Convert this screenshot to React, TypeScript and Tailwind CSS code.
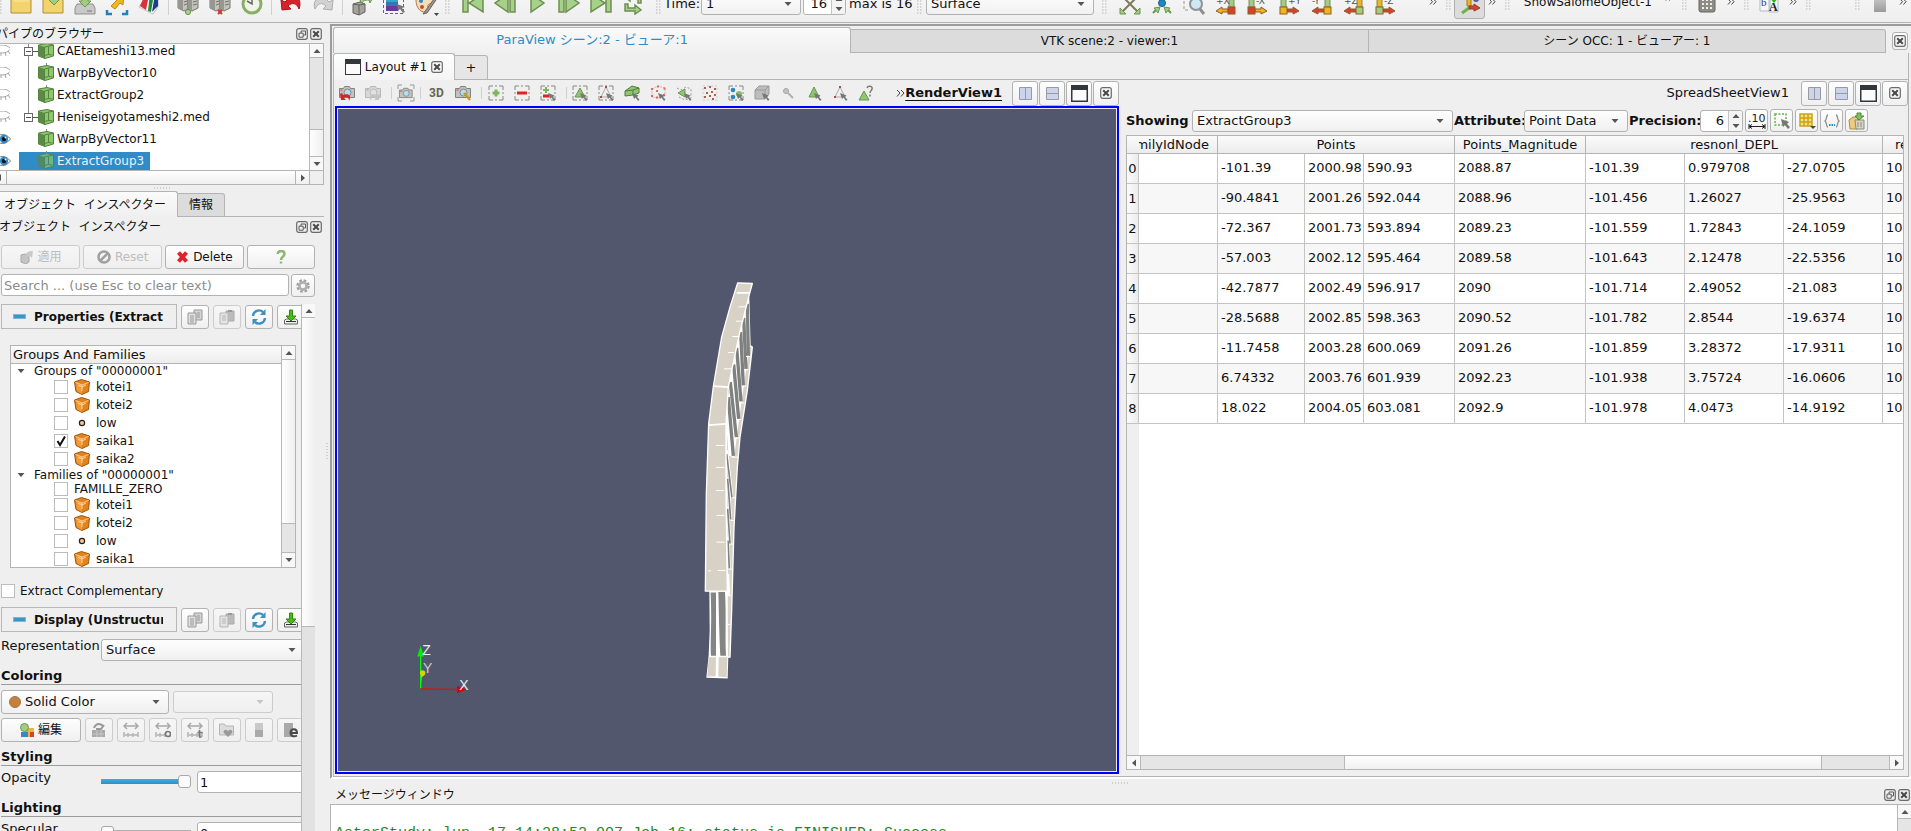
import type { ReactNode } from 'react';
import { clsx } from 'clsx';

const raised = 'border border-[#b2b2b2] rounded-[3px] bg-linear-to-b from-[#fefefe] to-[#f0f0f0]';
const faded = 'border border-[#cccccc] rounded-[3px] bg-linear-to-b from-[#f6f6f6] to-[#efefef]';

/* ---------- small building blocks ---------- */

function Svg({ w = 16, h = 16, className, children }: { w?: number; h?: number; className?: string; children: ReactNode }) {
  return (
    <svg width={w} height={h} viewBox={`0 0 ${w} ${h}`} fill="none" className={clsx('shrink-0', className)} aria-hidden="true">
      {children}
    </svg>
  );
}

function Caret({ dir = 'down', color = '#555' }: { dir?: 'up' | 'down' | 'left' | 'right'; color?: string }) {
  const d = {
    down: 'M0.5 2h7L4 6z',
    up: 'M0.5 6h7L4 2z',
    left: 'M6 0.5v7L2 4z',
    right: 'M2 0.5v7L6 4z',
  }[dir];
  return <Svg w={8} h={8}><path d={d} fill={color} /></Svg>;
}

function Handle() {
  return (
    <Svg w={5} h={18}>
      {[1, 4, 7, 10, 13, 16].map((y) => (
        <path key={y} d={`M0 ${y}h1.5M3 ${y}h1.5`} stroke="#b8b8b8" />
      ))}
    </Svg>
  );
}

function Grip({ vertical }: { vertical?: boolean }) {
  return vertical
    ? <Svg w={2} h={17}><path d="M1 0v17" stroke="#b0b0b0" strokeDasharray="1 2" /></Svg>
    : <Svg w={17} h={2}><path d="M0 1h17" stroke="#b0b0b0" strokeDasharray="1 2" /></Svg>;
}

function Sep({ className }: { className?: string }) {
  return <div className={clsx('w-px shrink-0 bg-[#d0d0d0]', className)} />;
}

function More() {
  return (
    <Svg w={8} h={8}>
      <path d="M1 1l2.5 2.7L1 6.5M4.5 1L7 3.7 4.5 6.5" stroke="#444" />
    </Svg>
  );
}

function CloseGlyph() {
  return (
    <Svg w={12} h={12}>
      <rect x="0.7" y="0.7" width="10.6" height="10.6" rx="2" stroke="#6a6a6a" strokeWidth="1.2" />
      <path d="M3.2 3.2l5.6 5.6M8.8 3.2L3.2 8.8" stroke="#4a4a4a" strokeWidth="2" />
    </Svg>
  );
}

function FloatGlyph() {
  return (
    <Svg w={12} h={12}>
      <rect x="0.7" y="0.7" width="10.6" height="10.6" rx="2" stroke="#6a6a6a" strokeWidth="1.2" />
      <path d="M5 5V3h4.5v4H7.5M3 5.2h4.2v4H3z" stroke="#5a5a5a" />
    </Svg>
  );
}

function DockTitle({ children, className }: { children: ReactNode; className?: string }) {
  return (
    <div className={clsx('flex shrink-0 items-center justify-between', className)}>
      <h2 className="text-xs whitespace-pre">{children}</h2>
      <div className="flex gap-[2px]">
        <button type="button" aria-label="Float"><FloatGlyph /></button>
        <button type="button" aria-label="Close"><CloseGlyph /></button>
      </div>
    </div>
  );
}

function Select({ value, label, className, disabled, children }: { value: string; label: string; className?: string; disabled?: boolean; children?: ReactNode }) {
  return (
    <div className={clsx('relative flex shrink-0 items-center', disabled ? faded : raised, className)}>
      {children}
      <select aria-label={label} disabled={disabled} defaultValue={value} className="h-full w-full appearance-none bg-transparent pl-1 outline-none">
        <option>{value}</option>
      </select>
      <span className="pointer-events-none absolute right-2"><Caret color={disabled ? '#c4c4c4' : '#555'} /></span>
    </div>
  );
}

function Spinner({ value, label, className }: { value: string; label: string; className?: string }) {
  return (
    <div className={clsx('flex shrink-0 overflow-hidden rounded-[3px] border border-[#b2b2b2] bg-white', className)}>
      <input aria-label={label} defaultValue={value} className="w-0 flex-1 px-1 text-right outline-none" />
      <div className="flex w-[14px] flex-col items-center justify-center gap-[2px] border-l border-[#c4c4c4] bg-[#f4f4f4]">
        <Caret dir="up" />
        <Caret />
      </div>
    </div>
  );
}

function VBar({ top, thumb }: { top: string; thumb: string }) {
  return (
    <div className="flex w-[14px] shrink-0 flex-col border-l border-[#b8b8b8] bg-[#e5e5e5]">
      <div className="flex h-[14px] shrink-0 items-center justify-center border-b border-[#b8b8b8] bg-[#f8f8f8]"><Caret dir="up" /></div>
      <div className={clsx('shrink-0', top)} />
      <div className={clsx('shrink-0 border-y border-[#b8b8b8] bg-linear-to-r from-[#fefefe] to-[#f0f0f0]', thumb)} />
      <div className="flex h-[14px] shrink-0 items-center justify-center bg-[#f8f8f8]"><Caret /></div>
    </div>
  );
}

/* ---------- main toolbar ---------- */

const folder = <path d="M1 3h7l2 3h11v14H1z" fill="#f3d36b" stroke="#a98f3c" />;
const server = (
  <>
    <path d="M1 3l5-3 5 3v13l-4 2-6-3zM11 3l5-3 5 3v12l-6 3-4-2z" fill="#c3c3bd" stroke="#74746c" />
    <path d="M1 3l5 2v13l-5-3zM11 3l4 2v13l-4-2z" fill="#97978f" />
    <path d="M7 9l3-1M7 12l3-1M16 9l4-1M16 12l4-1" stroke="#74746c" />
  </>
);

const fileIcons = [
  <>{folder}<path d="M3 8h16" stroke="#fae9a8" /></>,
  <>{folder}<path d="M8 0h7v5h4l-7 7-7-7h3z" fill="#a3cc83" stroke="#6c9550" /></>,
  <><path d="M1 15l2-4h16l2 4v6H1z" fill="#c8c8c8" stroke="#8f8f8f" /><path d="M8 0h6v8h3l-6 6-6-6h3z" fill="#a3cc83" stroke="#6c9550" /><path d="M13 18h5" stroke="#777" /></>,
  <><path d="M8 3l10-2-1 11-3-2-5 6-4-3 6-6z" fill="#f2b71c" stroke="#b98a14" /><path d="M1 17v4h5M16 21h5v-4" stroke="#2a7fb0" strokeWidth="2.5" /></>,
  <><path d="M1 14L10 0h10v14l-5 7z" fill="#fff" stroke="#bbb" /><path d="M2 13L8 0l3 2-3 15z" fill="#d9303a" /><path d="M10 18l2-18 4 1-3 18z" fill="#23883f" /><path d="M14 19l3-18 3 2v10z" fill="#1d3c8a" /></>,
];

const serverIcons = [
  <>{server}<circle cx="11" cy="19" r="2.6" fill="#a7d08a" stroke="#6c9550" /></>,
  <>{server}<path d="M9 17l4 4M13 17l-4 4" stroke="#d3332b" strokeWidth="2" /></>,
  <><circle cx="11" cy="11" r="9" fill="#eef4e6" stroke="#8aad68" strokeWidth="3" /><path d="M11 3v8L6 8" stroke="#666" strokeWidth="1.5" /></>,
];

const undoIcons = [
  <path d="M1 7l1 10 9-1-3-3c4-4 9-3 11 3 3-8-1-14-9-12L5 9z" fill="#d8222a" stroke="#a5151c" />,
  <path d="M21 7l-1 10-9-1 3-3c-4-4-8-3-11 3C0 8 6 3 13 5l4 4z" fill="#d2d2d2" stroke="#adadad" />,
];

const sourceIcons = [
  <><path d="M2 11l7-2 5 2v8l-6 3-6-2z" fill="#a3a39c" stroke="#63635c" /><path d="M8 12v10M2 11l6 1 6-1" stroke="#63635c" /><path d="M9 8c2-5 5-6 9-6l-1-2 5 4-3 6-1-3c-3 0-5 0-7 3z" fill="#a3cc83" stroke="#6c9550" /></>,
  <><rect x="3" y="4" width="12" height="5" fill="#35a7c9" /><rect x="3" y="9" width="12" height="4" fill="#3577b5" /><rect x="3" y="13" width="12" height="5" fill="#6a3b98" /><path d="M0.5 2v18.5h20V2" stroke="#666" strokeDasharray="3 2" /><path d="M14 11l1 7 2-2 3 4 2-1-3-4 3-1z" fill="#777" /></>,
  <><path d="M1 7c0-9 17-9 18 0 0 4-5 3-6 5s2 6-2 7C5 20 1 14 1 7z" fill="#f4dcb4" stroke="#a8804a" /><circle cx="6" cy="8" r="2" fill="#2e8bc5" /><circle cx="7" cy="14" r="2" fill="#d8402f" /><path d="M8 21L19 6l2 1-9 13z" fill="#9a9486" stroke="#6d675a" /><path d="M19 20h5l-2.5 3z" fill="#444" /></>,
];

const playIcons = [
  <path d="M1 1h5v18H1zM21 1v18L7 10z" />,
  <path d="M21 1h-5v18h5zM14 1v18L1 10z" />,
  <path d="M5 1v18l13-9z" />,
  <path d="M1 1h5v18H1zM8 1v18l13-9z" />,
  <path d="M1 1v18l14-9zM16 1h5v18h-5z" />,
  <path d="M3 11h3v4h7v-3l6 5-6 4v-3H3zM19 10h-3V5H8v3L3 4l5-4v2h11z" />,
];

function ViewAxis({ name, bar, box, arrow, flip }: { name: string; bar: string; box: string; arrow: string; flip?: boolean }) {
  return (
    <>
      <path d={flip ? 'M14 0h5v14h-5z' : 'M2 0h5v14H2z'} fill={bar} stroke="#7d8a62" />
      <path d={flip ? 'M13 16H7v-2l-6 4 6 3v-2h6z' : 'M8 16h6v-2l6 4-6 3v-2H8z'} fill={arrow} stroke="#8f5a2a" />
      <rect x={flip ? 13 : 1} y="14" width="7" height="7" fill={box} stroke="#8a5d2a" />
      <text x={flip ? 1 : 9} y="11" fontSize="9" fontFamily="DejaVu Sans" fill="#555">{name}</text>
    </>
  );
}

const RED = '#d9412f';
const YEL = '#f0b51e';
const GRN = '#a3cc83';

const cameraIcons = [
  <><path d="M3 3l16 16M19 3L3 19" stroke="#7d7a5c" strokeWidth="2" /><path d="M1 21v-6l6 6zM21 21v-6l-6 6z" fill="#a3cc83" stroke="#6c9550" /></>,
  <><circle cx="11" cy="10" r="3.5" fill="#1f87c4" stroke="#16618d" /><path d="M2 20l5-5M20 20l-5-5" stroke="#6c9550" strokeWidth="2" /><path d="M3 15l6-1-2 6zM19 15l-6-1 2 6z" fill="#a3cc83" stroke="#6c9550" /></>,
  <><path d="M1 3v14h6" stroke="#999" strokeDasharray="3 2" /><circle cx="13" cy="11" r="6" fill="#cfe6f3" stroke="#8e9499" strokeWidth="2" /><path d="M17 16l4 5" stroke="#8e8e8e" strokeWidth="3" /></>,
  <ViewAxis name="+X" bar={GRN} box={RED} arrow={YEL} flip />,
  <ViewAxis name="-X" bar={GRN} box={RED} arrow={YEL} />,
  <ViewAxis name="+Y" bar={GRN} box={YEL} arrow={RED} />,
  <ViewAxis name="-Y" bar={GRN} box={YEL} arrow={RED} flip />,
  <ViewAxis name="+Z" bar={YEL} box={GRN} arrow={RED} flip />,
  <ViewAxis name="-Z" bar={YEL} box={GRN} arrow={RED} />,
];

function IconGroup({ icons, names }: { icons: ReactNode[]; names: string }) {
  return (
    <div className="flex shrink-0 gap-[10px]">
      {icons.map((icon, i) => (
        <button key={i} type="button" aria-label={`${names} ${i + 1}`}>
          <Svg w={22} h={22} className="overflow-visible">{icon}</Svg>
        </button>
      ))}
    </div>
  );
}

function MainToolbar() {
  return (
    <header className="flex h-[23px] shrink-0 items-end overflow-hidden border-b border-[#b4b4b4] bg-linear-to-b from-[#f4f4f4] to-[#eeeeee] pb-[7px]">
      <div className="flex shrink-0 items-end gap-2">
        <Svg w={2} h={18}>{[1, 4, 7, 10, 13, 16].map((y) => <path key={y} d={`M0 ${y}h1.5`} stroke="#b8b8b8" />)}</Svg>
        <IconGroup icons={fileIcons} names="File" />
        <Sep className="h-[22px]" />
        <IconGroup icons={serverIcons} names="Server" />
        <Sep className="h-[22px]" />
        <IconGroup icons={undoIcons} names="History" />
        <Sep className="h-[22px]" />
        <IconGroup icons={sourceIcons} names="Source" />
        <Handle />
      </div>
      <div className="ml-3 flex shrink-0 gap-[10px]">
        {playIcons.map((icon, i) => (
          <button key={i} type="button" aria-label={`Play ${i + 1}`}>
            <Svg w={22} h={22}><g fill="#a6d189" stroke="#6f8f52" strokeWidth="1.5">{icon}</g></Svg>
          </button>
        ))}
      </div>
      <div className="ml-3 flex shrink-0 items-end">
        <Handle />
        <label className="ml-[3px] w-[37px] leading-[22px]">Time:</label>
        <Select label="Time" value="1" className="h-[22px] w-[100px]" />
        <Spinner label="Step" value="16" className="ml-[2px] h-[22px] w-[43px]" />
        <span className="ml-[3px] w-[68px] leading-[22px] whitespace-nowrap">max is 16</span>
        <Handle />
        <Select label="Representation mode" value="Surface" className="ml-1 h-[22px] w-[168px]" />
        <span className="ml-2"><Handle /></span>
      </div>
      <div className="ml-3 flex shrink-0"><IconGroup icons={cameraIcons} names="Camera" /></div>
      <div className="ml-auto flex shrink-0 items-center gap-[9px] pr-1">
        <More />
        <Handle />
        <button type="button" aria-label="Orientation axes" className="-mx-[6px] -mb-1 h-[30px] w-[31px] rounded-[3px] border border-[#b0b0b0] bg-[#dcdcdc] pl-1">
          <Svg w={22} h={22}><path d="M8 0h4v13H8z" fill="#f0b51e" stroke="#9a7a1e" /><path d="M10 15L3 20" stroke="#6fb14c" strokeWidth="3" /><path d="M10 13h5v-2l6 4-6 3v-2h-5z" fill="#d9412f" stroke="#8f3a2a" /><circle cx="17" cy="6" r="3" fill="#555a9c" /></Svg>
        </button>
        <More />
        <Handle />
        <span className="ml-[5px] text-xs leading-[22px]">ShowSalomeObject-1</span>
        <span className="mb-2 ml-1"><More /></span>
        <Handle />
        <Svg w={22} h={22}><rect x="3" y="1" width="16" height="20" rx="2" fill="#8d8d86" stroke="#66665f" /><path d="M6 9h11M6 13h11M6 17h11" stroke="#eee" strokeWidth="2" strokeDasharray="2 2" /></Svg>
        <More />
        <Handle />
        <Svg w={22} h={22}><path d="M2 0h10v20H2zM11 6h9v15h-9z" fill="#f4f6fa" stroke="#b4b9c4" /><text x="3" y="15" fontSize="11" fontFamily="Liberation Serif" fill="#1f3b66">b</text><text x="11" y="20" fontSize="12" fontFamily="Liberation Serif" fontWeight="bold" fill="#222">A</text><path d="M13 0h5v6h3l-5 6-5-6h2z" fill="#27b51c" /></Svg>
        <More />
        <Handle />
        <span className="w-[26px]" />
        <Handle />
        <div className="mr-1 ml-[5px] h-5 w-3 bg-linear-to-b from-[#dcdcdc] to-[#9a9a9a]" />
        <More />
      </div>
    </header>
  );
}

/* ---------- pipeline browser ---------- */

const pipeline = [
  { name: 'CAEtameshi13.med', root: true, shown: false },
  { name: 'WarpByVector10', root: false, shown: false },
  { name: 'ExtractGroup2', root: false, shown: false },
  { name: 'Heniseigyotameshi2.med', root: true, shown: false },
  { name: 'WarpByVector11', root: false, shown: true },
  { name: 'ExtractGroup3', root: false, shown: true, selected: true },
];

function Eye({ open }: { open: boolean }) {
  return (
    <Svg w={11} h={12}>
      {open ? (
        <>
          <path d="M-5 6C-1 0 6 0 10.5 6 6 12-1 12-5 6z" fill="#fff" stroke="#777" />
          <circle cx="4" cy="6" r="4.2" fill="#2b8bc8" />
          <circle cx="4" cy="6" r="2.2" fill="#111" />
          <circle cx="5.5" cy="4.5" r="1" fill="#fff" />
        </>
      ) : (
        <path d="M-5 3C-1-1 6-1 10 3M-5 5C-1 9 6 9 9.5 5M1 8v3M5 7l1 4M8 6l2 3" stroke="#a4a4a4" />
      )}
    </Svg>
  );
}

function PipelineBrowser() {
  return (
    <section className="flex h-[142px] shrink-0 flex-col border-y border-r border-[#b4b4b4] bg-white">
      <div className="flex min-h-0 flex-1 overflow-hidden">
        <ul className="-mt-1 min-w-0 flex-1 text-xs">
          {pipeline.map((item, i) => (
            <li key={item.name} className="flex h-[22px] items-center">
              <Eye open={item.shown} />
              <div className={clsx('ml-2 flex h-[18px] items-center pr-[6px]', item.selected && 'bg-[#308cc6] text-[#e8f3fa]')}>
                <Svg w={19} h={22}>
                  {i < 4 && <path d={i === 3 ? 'M9.5 0v11' : 'M9.5 0v22'} stroke="#888" />}
                  {item.root && (
                    <>
                      <rect x="5.5" y="7.5" width="8" height="8" fill="#fff" stroke="#666" />
                      <path d="M7 11.5h5M14 11.5h5" stroke="#555" />
                    </>
                  )}
                </Svg>
                <Svg w={16} h={20} className="mr-[3px]">
                  {!item.root && <path d="M8.5 0v3" stroke="#888" />}
                  <g opacity={item.selected ? 0.7 : 1} strokeLinejoin="round">
                    <path d="M0.5 4L9 2.5l6.5 1.5v11L7 17.5l-6.5-2.5z" fill="#8bc96a" stroke="#5a7c45" />
                    <path d="M0.5 4L6.5 6v11.500l-6-2.500z" fill="#5c8a45" />
                    <path d="M6.5 6v11.500M6.5 6l9-2M10.5 5.500v8l-4 1M10.5 13.5l4 .5" stroke="#55823f" />
                  </g>
                </Svg>
                <span>{item.name}</span>
              </div>
            </li>
          ))}
        </ul>
        <VBar top="h-[71px]" thumb="h-7" />
      </div>
      <div className="flex h-[14px] shrink-0 items-center border-t border-[#b4b4b4] bg-linear-to-b from-[#fefefe] to-[#f0f0f0]">
        <div className="h-full w-[7px] border-r border-[#b4b4b4]"><Svg w={4} h={13}><path d="M1 3v7L-3 6.5z" fill="#555" /></Svg></div>
        <div className="h-full flex-1" />
        <div className="flex h-full w-[15px] items-center justify-center border-x border-[#b4b4b4]"><Caret dir="right" /></div>
        <div className="h-full w-[13px] bg-[#efefef]" />
      </div>
    </section>
  );
}

/* ---------- object inspector ---------- */

function Cube() {
  return (
    <Svg w={16} h={16}>
      <path d="M0.5 3l7-2.5L15.5 3l-1 9.5L8 15.5l-6-3z" fill="#e5821a" stroke="#9c560c" />
      <path d="M2 4l6 2v9l-5-3z" fill="#f39a34" />
      <path d="M1.5 3.5L8 6l6.5-2.5" stroke="#ffcb90" />
      <path d="M4 6.5l4 1M8 6v6M8 8l4-2" stroke="#ffd9ac" />
    </Svg>
  );
}

function Tick({ checked, label, id }: { checked?: boolean; label: string; id: string }) {
  return (
    <span className="relative flex h-[14px] w-[14px] shrink-0">
      <input id={id} aria-label={label} type="checkbox" defaultChecked={checked} className="h-[14px] w-[14px] appearance-none border border-[#bcbcbc] bg-white" />
      {checked && (
        <Svg w={14} h={14} className="pointer-events-none absolute inset-0"><path d="M3.5 7l2.5 4 5-8.5" stroke="#111" strokeWidth="2" /></Svg>
      )}
    </span>
  );
}

type Family = { name: string; kind: 'cube' | 'dot' | 'none'; checked?: boolean };

const groups: Family[] = [
  { name: 'kotei1', kind: 'cube' },
  { name: 'kotei2', kind: 'cube' },
  { name: 'low', kind: 'dot' },
  { name: 'saika1', kind: 'cube', checked: true },
  { name: 'saika2', kind: 'cube' },
];
const families: Family[] = [
  { name: 'FAMILLE_ZERO', kind: 'none' },
  { name: 'kotei1', kind: 'cube' },
  { name: 'kotei2', kind: 'cube' },
  { name: 'low', kind: 'dot' },
  { name: 'saika1', kind: 'cube' },
];

function FamilyTree({ title, items }: { title: string; items: Family[] }) {
  return (
    <>
      <div className="flex h-[14px] items-center gap-[9px] pl-[6px] leading-[14px]"><Caret />{title}</div>
      {items.map((item) => (
        <label key={item.name} className={clsx('flex items-center pl-[43px]', item.kind === 'none' ? 'h-[14px]' : 'h-[18px]')}>
          <Tick id={`${title}-${item.name}`} label={item.name} checked={item.checked} />
          <span className="ml-[6px] flex items-center gap-[6px] leading-[14px]">
            {item.kind === 'cube' && <Cube />}
            {item.kind === 'dot' && <Svg><circle cx="8" cy="8" r="2.6" fill="#f8c78a" stroke="#222" strokeWidth="1.2" /></Svg>}
            {item.name}
          </span>
        </label>
      ))}
    </>
  );
}

const headerIcons = [
  <><path d="M7 1h8v10H7z" fill="#d4d4d4" stroke="#999" /><path d="M1 4h8v11H1z" fill="#e0e0e0" stroke="#999" /><path d="M3 7h4M3 9h4M3 11h4M3 13h4M10 4h3M10 6h3M10 8h3" stroke="#999" /></>,
  <><path d="M7 2h8v10H7z" fill="#bbb" stroke="#aaa" /><path d="M9 1h4v2H9z" fill="#999" /><path d="M1 4h8v11H1z" fill="#e4e4e4" stroke="#b5b5b5" /><path d="M3 7h4M3 9h4M3 11h4" stroke="#b5b5b5" /></>,
  <><path d="M2 7a6 6 0 0 1 10-4M14 9a6 6 0 0 1-10 4" stroke="#3d8fbf" strokeWidth="2.4" /><path d="M14.5 0v6H9zM1.5 16v-6H7z" fill="#3d8fbf" /></>,
  <><path d="M1.5 11v4h13v-4l-2-1h-9z" fill="#eee" stroke="#666" /><path d="M3 12.5h10" stroke="#333" /><path d="M6.5 1h3v6H13l-5 5-5-5h3.5z" fill="#4dbb16" stroke="#2f8a0a" /></>,
];

function SectionHeader({ title }: { title: string }) {
  return (
    <div className="flex h-[25px] shrink-0 gap-1">
      <h3 className="flex w-[176px] shrink-0 items-center gap-2 border border-[#b8b8b8] pr-[13px] pl-[11px] text-xs font-bold">
        <Svg w={13} h={5}><rect x="0.5" y="0.5" width="12" height="4" fill="#3a96c8" stroke="#7fb6d4" /></Svg>
        <span className="overflow-hidden whitespace-nowrap">{title}</span>
      </h3>
      {headerIcons.map((icon, i) => (
        <button key={i} type="button" aria-label={`${title} action ${i + 1}`} className={clsx('mt-px flex h-6 w-7 shrink-0 items-center justify-center', i === 1 ? faded : raised)}>
          <Svg>{icon}</Svg>
        </button>
      ))}
    </div>
  );
}

const rangeBase = <path d="M1 10v5M5 11v4M10 11v4M15 10v5M1 13h14" stroke="#b4b4b4" strokeWidth="1.5" />;

const colorMapIcons = [
  <><path d="M1 8h13v7H1z" fill="#aaa" /><path d="M2 12h11M6 8v7M10 8v7" stroke="#c9c9c9" /><path d="M3 6c2-5 6-5 9-2M5 7h5l3-4" stroke="#999" strokeWidth="2" /></>,
  <>{rangeBase}<path d="M1 4h14M4 1L1 4l3 3M12 1l3 3-3 3" stroke="#a8a8a8" strokeWidth="1.5" /></>,
  <>{rangeBase}<path d="M1 4h14M4 1L1 4l3 3M12 1l3 3-3 3" stroke="#a8a8a8" strokeWidth="1.5" /><circle cx="13" cy="12" r="2.5" fill="#f2f2f2" stroke="#777" strokeWidth="1.6" /></>,
  <>{rangeBase}<path d="M1 4h14M4 1L1 4l3 3M12 1l3 3-3 3" stroke="#a8a8a8" strokeWidth="1.5" /><path d="M12.5 8v7h2M10.5 10.5h5" stroke="#777" strokeWidth="1.6" /></>,
  <><path d="M0.5 2h5l1 2h8v9h-14z" fill="#ddd" stroke="#b5b5b5" /><path d="M9 15L4.5 10.5c0-4 4-3 4.5-1 .5-2 4.5-3 4.5 1z" fill="#9a9a9a" /></>,
  <><path d="M4 1h8v14H4z" fill="#c9c9c9" /><path d="M4 8h8v7H4z" fill="#a9a9a9" /></>,
  <><path d="M1 1h9v14H1z" fill="#a9a9a9" /><path d="M7 11h7c0-5-6-5-6.5-.5 0 5 5 4 6.5 3" stroke="#4a4a4a" strokeWidth="2" /></>,
];

function GroupTitle({ children }: { children: ReactNode }) {
  return <h4 className="h-4 shrink-0 border-b border-[#9c9c9c] leading-[14px] font-bold">{children}</h4>;
}

function SliderRow({ label, value, full }: { label: string; value: string; full?: boolean }) {
  return (
    <label className="mt-[5px] flex h-[23px] shrink-0">
      <span className="w-[100px] shrink-0 leading-[14px]">{label}</span>
      <input
        type="range"
        aria-label={label}
        min="0"
        max="1"
        defaultValue={value}
        className={clsx(
          'mt-[3px] h-[14px] w-[90px] shrink-0 appearance-none bg-[length:100%_5px] bg-center bg-no-repeat',
          'bg-linear-to-b [&::-webkit-slider-thumb]:h-[13px] [&::-webkit-slider-thumb]:w-[13px] [&::-webkit-slider-thumb]:appearance-none [&::-webkit-slider-thumb]:rounded-[3px] [&::-webkit-slider-thumb]:border [&::-webkit-slider-thumb]:border-[#a8a8a8] [&::-webkit-slider-thumb]:bg-[#fbfbfb]',
          full ? 'from-[#3daee9] to-[#308cc6]' : 'from-[#a9a9a9] to-[#dedede]',
        )}
      />
      <input aria-label={`${label} value`} defaultValue={value} className="ml-[6px] h-[22px] w-28 shrink-0 rounded-[3px] border border-[#b2b2b2] bg-white px-[2px] outline-none" />
    </label>
  );
}

function Inspector() {
  return (
    <>
      <div className="flex h-[6px] shrink-0 items-center justify-center"><Grip /></div>
      <div className="flex h-[26px] shrink-0 items-end">
        <button type="button" className="h-[26px] w-[178px] rounded-tr-[3px] border-t border-r border-[#b4b4b4] bg-linear-to-b from-[#fbfbfb] to-[#efefef] pl-1 text-left text-xs whitespace-pre">オブジェクト  インスペクター</button>
        <button type="button" className="h-6 w-[47px] rounded-tr-[3px] border-y border-r border-[#b4b4b4] bg-[#dcdcdc] text-xs">情報</button>
        <div className="h-px flex-1 bg-[#b4b4b4]" />
      </div>
      <DockTitle className="-ml-px h-5 pr-[2px]">オブジェクト  インスペクター</DockTitle>

      <div className="mt-2 flex h-6 shrink-0 gap-[3px] pr-[9px] pl-px">
        <button type="button" disabled className={clsx('flex flex-[80] items-center justify-center gap-1 text-xs text-[#bdbdbd]', faded)}>
          <Svg w={14} h={14}><path d="M1 5l4-1 4 2v6l-3 2-5-2z" fill="#c4c4c4" stroke="#a9a9a9" /><path d="M6 4c2-3 4-3 7-3l-1 7-2-2-3 1z" fill="#c9c9c9" /></Svg>
          適用
        </button>
        <button type="button" disabled className={clsx('flex flex-[80] items-center justify-center gap-1 text-xs text-[#bdbdbd]', faded)}>
          <Svg w={14} h={14}><circle cx="7" cy="7" r="5.5" stroke="#a0a0a0" strokeWidth="2.5" /><path d="M11 3l-8 8" stroke="#a0a0a0" strokeWidth="2.5" /></Svg>
          Reset
        </button>
        <button type="button" className={clsx('flex flex-[80] items-center justify-center gap-[5px] text-xs', raised)}>
          <Svg w={11} h={12}><path d="M1.5 1.5l8 9M9.5 1.5l-8 9" stroke="#e0222a" strokeWidth="4" /></Svg>
          Delete
        </button>
        <button type="button" aria-label="Help" className={clsx('flex flex-[68] items-center justify-center', raised)}>
          <Svg w={10} h={14}><path d="M1.5 4C2 0 8.5 0 8.5 4c0 2.5-3.5 3-3.5 6M5 11.5v2" stroke="#8db572" strokeWidth="2.4" /></Svg>
        </button>
      </div>

      <div className="mt-[5px] flex h-[23px] shrink-0 gap-[2px] pr-[9px] pl-px">
        <input aria-label="Search" placeholder="Search ... (use Esc to clear text)" className="h-[22px] min-w-0 flex-1 rounded-[3px] border border-[#b2b2b2] bg-white px-[2px] outline-none placeholder:text-[#8c8c8c]" />
        <button type="button" aria-label="Advanced" className={clsx('flex w-6 items-center justify-center', raised)}>
          <Svg w={14} h={14}><circle cx="7" cy="7" r="5.5" stroke="#a0a0a0" strokeWidth="2.5" strokeDasharray="2.6 1.72" /><circle cx="7" cy="7" r="3.6" stroke="#b0b0b0" strokeWidth="2.6" /></Svg>
        </button>
      </div>

      <div className="mt-[7px] mr-[9px] flex min-h-0 flex-1">
        <div className="flex min-w-0 flex-1 flex-col overflow-hidden pl-px">
          <SectionHeader title="Properties (ExtractGroup3)" />

          <div className="mt-4 mr-[5px] ml-[9px] flex h-[223px] shrink-0 overflow-hidden border border-[#b4b4b4] bg-white text-xs">
            <div className="min-w-0 flex-1">
              <div className="h-[18px] border-b border-[#b4b4b4] bg-linear-to-b from-[#fbfbfb] to-[#ececec] pl-[2px] text-[13px] leading-[17px]">Groups And Families</div>
              <FamilyTree title={'Groups of "00000001"'} items={groups} />
              <FamilyTree title={'Families of "00000001"'} items={families} />
            </div>
            <div className="flex w-[14px] shrink-0 flex-col border-l border-[#b8b8b8]">
              <div className="flex h-[14px] items-center justify-center border-b border-[#b8b8b8] bg-[#f8f8f8]"><Caret dir="up" /></div>
              <div className="flex-1 bg-linear-to-r from-[#fefefe] to-[#f0f0f0]" />
              <div className="h-[30px] border-y border-[#b8b8b8] bg-[#e5e5e5]" />
              <div className="flex h-[14px] items-center justify-center bg-[#f8f8f8]"><Caret /></div>
            </div>
          </div>

          <label className="mt-4 flex h-[14px] shrink-0 items-center gap-[5px] text-xs leading-[14px]">
            <Tick id="complementary" label="Extract Complementary" />
            Extract Complementary
          </label>

          <div className="mt-[9px] shrink-0"><SectionHeader title="Display (UnstructuredGridRepresentation)" /></div>

          <div className="mt-[7px] flex h-[23px] shrink-0">
            <span className="w-[100px] shrink-0 leading-[14px]">Representation</span>
            <Select label="Representation" value="Surface" className="h-[22px] w-[204px]" />
          </div>

          <div className="mt-[7px]"><GroupTitle>Coloring</GroupTitle></div>
          <div className="mt-[5px] flex h-6 shrink-0 items-center gap-1">
            <Select label="Color by" value="Solid Color" className="h-6 w-[168px] pl-[7px]">
              <span className="h-3 w-3 shrink-0 rounded-full border border-[#9a7752] bg-[#c77f3e]" />
            </Select>
            <Select label="Component" value="" disabled className="h-[22px] w-[100px]" />
          </div>
          <div className="mt-1 flex h-6 shrink-0 gap-1">
            <button type="button" className={clsx('flex w-20 shrink-0 items-center justify-center gap-1 text-xs', raised)}>
              <Svg w={14} h={14}><path d="M5 5h9v9H5z" fill="#e8b93a" /><path d="M1 9h7v5H1z" fill="#3d86c4" /><path d="M10 9h4v5h-4z" fill="#d8402f" /><circle cx="4.5" cy="4.5" r="4" fill="#a3cc83" stroke="#6c9550" /></Svg>
              編集
            </button>
            {colorMapIcons.map((icon, i) => (
              <button key={i} type="button" disabled aria-label={`Color map ${i + 1}`} className={clsx('flex w-7 shrink-0 items-center justify-center', faded)}>
                <Svg>{icon}</Svg>
              </button>
            ))}
          </div>

          <div className="mt-2"><GroupTitle>Styling</GroupTitle></div>
          <SliderRow label="Opacity" value="1" full />
          <div className="mt-[7px]"><GroupTitle>Lighting</GroupTitle></div>
          <SliderRow label="Specular" value="0" />
        </div>

        <div className="flex w-[14px] shrink-0 flex-col border-l border-[#b8b8b8] bg-[#e2e2e2]">
          <div className="flex h-[14px] shrink-0 items-center justify-center border-b border-[#b8b8b8] bg-[#f8f8f8]"><Caret dir="up" /></div>
          <div className="h-[309px] shrink-0 border-b border-[#b8b8b8] bg-linear-to-r from-[#fefefe] to-[#f0f0f0]" />
        </div>
      </div>
    </>
  );
}

/* ---------- render view ---------- */

const dashed = <path d="M1 5V1h4M11 1h4v4M15 11v4h-4M5 15H1v-4M7 1h2M7 15h2M1 7v2M15 7v2" stroke="#8a8a80" />;
const pointer = <path d="M8 8l2 6 1.5-1.5L14 16l1.5-1.5-2.5-2.5 1.5-1.5z" fill="#777" />;
const camera = (
  <>
    <path d="M0.5 3.5h4l1-2h5l1 2h4v9H0.5z" fill="#c2c2bc" stroke="#83837c" />
    <circle cx="8.5" cy="7.5" r="3.5" fill="#b9dbef" stroke="#7c8a92" />
    <path d="M1.5 5h2" stroke="#e33" />
  </>
);

const selectIcons = [
  <>{dashed}<path d="M8 4.500v7M4.500 8h7" stroke="#7db75c" strokeWidth="3" /></>,
  <>{dashed}<path d="M3 8h10" stroke="#dd2222" strokeWidth="3" /></>,
  <>{dashed}<path d="M6 2v6M3 5h6" stroke="#7db75c" strokeWidth="2" /><path d="M3 11h6" stroke="#dd2222" strokeWidth="3" />{pointer}</>,
];

const triangle = (
  <>
    <path d="M8 2L3 12h10z" stroke="#aaa" />
    <path d="M7 1h2v2H7zM2 11h2v2H2zM11 10h2v2h-2z" fill="#b04a3a" />
    {pointer}
  </>
);

const pickIcons = [
  <>{dashed}<path d="M8 3l5 9H3z" fill="#8fc672" stroke="#6c9550" />{pointer}</>,
  <>{dashed}{triangle}</>,
  <><path d="M1 6l7-5 7 2v5l-6 2-8 1z" fill="#8fc672" stroke="#557a3f" /><path d="M1 6l8-1 6-2M9 5v5" stroke="#557a3f" />{pointer}</>,
  <><path d="M2 4l6-3 7 2v8l-7 2-6-1z" stroke="#bbb" strokeDasharray="2 1" /><path d="M1 4h2M7 1.5h2M13.500 3.5h2M1 11h2M6 6h2M13 10h2M6 12.500h2" stroke="#e0685a" strokeWidth="2" />{pointer}</>,
  <><path d="M1 3l4 2 5-3 5 2v9l-6 2-6-3" stroke="#999" strokeDasharray="2 2" /><path d="M9 4v8L2 8z" fill="#8fc672" stroke="#6c9550" />{pointer}</>,
  <><path d="M1 1h14v14H1z" stroke="#ccc" strokeDasharray="2 2" /><path d="M2 3h2M7 2h2M12 4h2M4 8h2M9 7h2M2 12h2M7 11h2M12 10h2M10 14h2" stroke="#b0604a" strokeWidth="2" /></>,
  <>{dashed}<circle cx="5" cy="5" r="2.3" fill="#2b86c2" /><circle cx="5" cy="12" r="2.3" fill="#2b86c2" /><circle cx="11" cy="9" r="3" fill="#86bf68" />{pointer}</>,
  <><path d="M1 5l4-4h10v8l-4 5H1z" fill="#bdbdbd" stroke="#9a9a9a" /><path d="M1 5h10v9M11 5l4-4" stroke="#9a9a9a" />{pointer}</>,
  <><circle cx="6" cy="6" r="2.5" fill="#c4c4c4" stroke="#a4a4a4" /><path d="M8 8l5 5" stroke="#b0b0b0" strokeWidth="2" /></>,
  <><path d="M8 2l5 10H3z" fill="#8fc672" stroke="#6c9550" />{pointer}</>,
  triangle,
  <><path d="M6 6l5 9H1z" fill="#8fc672" stroke="#6c9550" /><path d="M9 3c1-3 6-2 5 1-.5 2-2 2-2 4M12 9.5v2" stroke="#7d7a6c" strokeWidth="1.5" /></>,
];

function Small({ icons, names }: { icons: ReactNode[]; names: string }) {
  return (
    <>
      {icons.map((icon, i) => (
        <button key={i} type="button" aria-label={`${names} ${i + 1}`} className="shrink-0"><Svg>{icon}</Svg></button>
      ))}
    </>
  );
}

const layoutIcons = [
  <path d="M1.5 1.5h12v12h-12zM7.5 1.5v12" fill="#ccd3ec" stroke="#9a9a9a" />,
  <path d="M1.5 1.5h12v12h-12zM1.5 7.5h12" fill="#ccd3ec" stroke="#9a9a9a" />,
  <><rect x="0" y="0" width="17" height="17" fill="#33363a" /><rect x="1.5" y="5" width="14" height="10.5" fill="#fbfbfb" /></>,
];

function LayoutButtons({ view }: { view: string }) {
  return (
    <div className="flex shrink-0 gap-px">
      {layoutIcons.map((icon, i) => (
        <button key={i} type="button" aria-label={`${view} layout ${i + 1}`} className={clsx('flex h-[25px] w-[26px] items-center justify-center', raised)}>
          <Svg w={i === 2 ? 17 : 15} h={i === 2 ? 17 : 15}>{icon}</Svg>
        </button>
      ))}
      <button type="button" aria-label={`Close ${view}`} className={clsx('flex h-[25px] w-[26px] items-center justify-center', raised)}><CloseGlyph /></button>
    </div>
  );
}

const ticks = [
  [236, 139, 258], [228, 182, 250], [217, 228, 238], [204, 276, 222], [192, 325, 216], [168, 555, 193], [168, 621, 193],
  [168, 690, 192], [170, 765, 194], [170, 845, 194], [144, 931, 153], [173, 930, 196],
];
const bars = [
  'M262 130L265 286', 'M251 172L258 325', 'M242 215L250 375', 'M230 262L243 423', 'M221 312L236 475', 'M211 365L229 530', 'M205 410L220 586',
];
const backSteps = ['M258 288h14', 'M253 328h12', 'M247 377h12', 'M238 427h14', 'M232 477h12', 'M226 533h12', 'M214 590h20', 'M215 712h10', 'M212 780h10', 'M209 851h10', 'M206 926h12', 'M203 1006h10', 'M202 1092h8'];

function Scene() {
  return (
    <svg viewBox="0 0 778 659" className="absolute inset-0 h-full w-full" role="img" aria-label="Deformed mesh">
      <g transform="translate(322 150) scale(0.3333)" strokeLinejoin="round">
        <path d="M266 110L270 255 277 260 262 390 240 530 232 620 222 800 215 1050 210 1190 202 1190 200 700 198 480 215 330 240 212z" fill="#d8d2c6" stroke="#fff" strokeWidth="4" />
        <path d="M266 110L270 255 265 290 258 330 251 380 244 428 237 480 230 534 222 590 206 585 198 480 215 330 240 212z" fill="#fff" />
        {bars.map((d) => <path key={d} d={d} stroke="#7f8180" strokeWidth="10" />)}
        <path d="M200 570L216 712M203 650L212 776M203 740L210 850M203 830L208 924M203 940L206 1005" stroke="#fff" strokeWidth="9" />
        <path d="M200 580L216 712M203 655L212 776M203 745L210 850M204 840L208 924" stroke="#808280" strokeWidth="5" />
        {backSteps.map((d) => <path key={d} d={d} stroke="#fff" strokeWidth="3" />)}
        <path d="M148 990h54v197h3l-2 67-64-2 7-68 3-74z" fill="#fff" />
        <path d="M152 996h16v190h-15c-2-60 3-90-1-190zM175 994h20c4 70 0 130 3 192h-17c-3-60-4-110-6-192z" fill="#838583" />
        <path d="M146 1190h22l-1 57-25 1zM176 1190h26l-2 60-25-2z" fill="#d8d2c6" />
        <path d="M233 67L277 69 266 110 240 212 215 330 205 380 198 490 198 700 202 992H136L139 700 146 490 160 378 185 230 210 140z" fill="#d8d2c6" stroke="#fff" strokeWidth="4" />
        <path d="M230 97h40M147 494l50-4M160 377l47 3" stroke="#fff" strokeWidth="5" />
        {ticks.map(([x, y, x2]) => <path key={y} d={`M${x} ${y}H${x2}`} stroke="#fff" strokeWidth="3" />)}
      </g>
      <g transform="translate(-18 510) scale(0.3333)">
        <path d="M302 160l13-6v8l-10 8-3 30z" fill="#e8e000" />
        <path d="M302 100v104" stroke="#0f0" strokeWidth="4" />
        <path d="M302 76l10 32h-20z" fill="#00f000" />
        <circle cx="308" cy="157" r="8" fill="#d8d200" />
        <path d="M302 205l110 2" stroke="#e01010" strokeWidth="4" />
        <path d="M411 196l28 11-28 11z" fill="#d80000" />
        <g fill="#eee" fontFamily="Liberation Sans" fontSize="42">
          <text x="307" y="105">Z</text>
          <text x="309" y="159" fill="#ccc">Y</text>
          <text x="418" y="209">X</text>
        </g>
      </g>
    </svg>
  );
}

function RenderView() {
  return (
    <section className="flex min-w-0 flex-1 flex-col pb-[2px]">
      <div className="flex h-[26px] shrink-0 items-center">
        <div className="flex shrink-0 items-center gap-[10px] overflow-hidden pl-1">
          <button type="button" aria-label="Camera undo" className="shrink-0"><Svg>{camera}<path d="M1 9l1 6h5l-2-2c2-2 5-1 5 3 3-5 0-8-6-6L3 8z" fill="#d8222a" /></Svg></button>
          <button type="button" aria-label="Camera redo" className="shrink-0 opacity-50 grayscale"><Svg>{camera}<path d="M15 9l-1 6H9l2-2c-2-2-5-1-5 3-3-5 0-8 6-6z" fill="#999" /></Svg></button>
          <Sep className="h-3" />
          <button type="button" aria-label="Capture" className="-mx-[5px] shrink-0"><Svg w={18} h={18}><path d="M1 5V1h4M13 1h4v4M17 13v4h-4M5 17H1v-4" stroke="#999" /><g transform="translate(2 3) scale(0.85)">{camera}</g></Svg></button>
          <Sep className="h-3" />
          <button type="button" className="-ml-[2px] h-4 w-4 shrink-0 text-left font-[Roboto] text-xs font-bold text-[#66664e]">3D</button>
          <button type="button" aria-label="Adjust camera" className="shrink-0"><Svg>{camera}<path d="M9 8l6 7" stroke="#c79a1c" strokeWidth="2.5" /></Svg></button>
          <Sep className="-mr-1 h-3" />
          <Small icons={selectIcons} names="Selection" />
          <Sep className="-mr-[5px] h-3" />
          <Small icons={pickIcons} names="Pick" />
        </div>
        <div className="ml-auto flex shrink-0 items-center">
          <Svg w={9} h={10}><path d="M1 2l3 3-3 3.5M5 2l3 3-3 3.5" stroke="#444" /></Svg>
          <h2 className="mr-[10px] font-bold underline underline-offset-[3px]">RenderView1</h2>
          <LayoutButtons view="RenderView1" />
        </div>
      </div>
      <div className="relative min-h-0 flex-1 border-2 border-[#0000ff]">
        <div className="relative h-full overflow-hidden border border-[#e8e8f0] bg-[#52576e]"><Scene /></div>
      </div>
    </section>
  );
}

/* ---------- spreadsheet view ---------- */

const rows = [
  ['-101.39', '2000.98', '590.93', '2088.87', '-101.39', '0.979708', '-27.0705'],
  ['-90.4841', '2001.26', '592.044', '2088.96', '-101.456', '1.26027', '-25.9563'],
  ['-72.367', '2001.73', '593.894', '2089.23', '-101.559', '1.72843', '-24.1059'],
  ['-57.003', '2002.12', '595.464', '2089.58', '-101.643', '2.12478', '-22.5356'],
  ['-42.7877', '2002.49', '596.917', '2090', '-101.714', '2.49052', '-21.083'],
  ['-28.5688', '2002.85', '598.363', '2090.52', '-101.782', '2.8544', '-19.6374'],
  ['-11.7458', '2003.28', '600.069', '2091.26', '-101.859', '3.28372', '-17.9311'],
  ['6.74332', '2003.76', '601.939', '2092.23', '-101.938', '3.75724', '-16.0606'],
  ['18.022', '2004.05', '603.081', '2092.9', '-101.978', '4.0473', '-14.9192'],
];

const sheetIcons = [
  <><text x="0" y="10" fontSize="11" fontFamily="DejaVu Sans" fill="#222">.10</text><path d="M1 12v5M17 12v5M1 14.5h16M4 12.5l-3 2 3 2M14 12.5l3 2-3 2" stroke="#222" /></>,
  <><path d="M2 2h11v11H2z" stroke="#6fae48" strokeWidth="1.5" strokeDasharray="2 1.5" /><path d="M8 7l2 8 2-2 3 4 2-2-3-3 2-2z" fill="#777" /></>,
  <><path d="M2 2h12v12H2zM6 2v12M10 2v12M2 6h12M2 10h12" fill="#fbe37c" stroke="#c9a21a" strokeWidth="1.5" /><path d="M12 14h6l-3 3z" fill="#444" /></>,
  <><path d="M5 3C3 3 4 8 2 9c2 1 1 6 3 6M13 3c2 0 1 5 3 6-2 1-1 6-3 6" stroke="#8a8a8a" strokeWidth="1.3" /><path d="M6 13h6" stroke="#2b8bc8" strokeWidth="2" strokeDasharray="1.5 1" /></>,
  <><path d="M1 8l4-3h5v12H2z" fill="#eccb7c" stroke="#a98f3c" /><path d="M7 8h9v9H8z" fill="#d9d4c4" stroke="#8a8a7a" /><path d="M10 10v5M13 10v5" stroke="#8a8a7a" /><path d="M9 1h4v3h3l-5 4-4-4h2z" fill="#7dc05a" stroke="#4f8a34" /></>,
];

function SpreadSheet() {
  return (
    <section className="flex min-w-0 flex-1 flex-col pl-[5px]">
      <div className="flex h-[26px] shrink-0 items-center justify-end gap-3">
        <h2>SpreadSheetView1</h2>
        <LayoutButtons view="SpreadSheetView1" />
      </div>
      <div className="mt-[3px] ml-[2px] flex h-[23px] shrink-0 items-center">
        <label className="w-[66px] font-bold">Showing</label>
        <div className="flex flex-1 *:w-full"><Select label="Showing" value="ExtractGroup3" className="h-[22px]" /></div>
        <label className="ml-px w-[70px] shrink-0 font-bold">Attribute:</label>
        <Select label="Attribute" value="Point Data" className="h-[22px] w-[104px]" />
        <label className="ml-px w-[71px] shrink-0 font-bold">Precision:</label>
        <Spinner label="Precision" value="6" className="h-[22px] w-[43px]" />
        <div className="mr-10 ml-[2px] flex gap-[2px]">
          {sheetIcons.map((icon, i) => (
            <button key={i} type="button" aria-label={`Sheet tool ${i + 1}`} className={clsx('flex h-[23px] w-[23px] items-center justify-center', raised)}><Svg w={18} h={18}>{icon}</Svg></button>
          ))}
        </div>
      </div>
      <div className="mt-[3px] mr-1 mb-[6px] ml-[2px] flex min-h-0 flex-1 flex-col overflow-hidden border border-[#b4b4b4] bg-white">
        <div className="flex min-h-0 flex-1 flex-col overflow-hidden">
          <table className="w-full shrink-0 table-fixed border-separate border-spacing-0">
            <colgroup>
              <col className="w-3" /><col className="w-[79px]" /><col className="w-[87px]" /><col className="w-[59px]" /><col className="w-[91px]" />
              <col className="w-[131px]" /><col className="w-[99px]" /><col className="w-[99px]" /><col className="w-[99px]" /><col />
            </colgroup>
            <thead>
              <tr className="h-[18px] bg-linear-to-b from-[#fbfbfb] to-[#ebebeb] leading-[17px] *:border-b *:border-[#b4b4b4] *:p-0 *:font-normal">
                <th />
                <th className="border-r"><div className="flex justify-end overflow-hidden pr-2">FamilyIdNode</div></th>
                <th className="border-r" colSpan={3}>Points</th>
                <th className="border-r">Points_Magnitude</th>
                <th className="border-r" colSpan={3}>resnonl_DEPL</th>
                <th className="overflow-hidden"><div className="w-5 overflow-hidden pl-3 text-left">re</div></th>
              </tr>
            </thead>
            <tbody>
              {rows.map((row, i) => (
                <tr key={i} className={clsx('h-[30px] *:border-b *:border-[#c4c4c4]', i % 2 ? 'bg-[#f7f7f7]' : 'bg-white')}>
                  <th className="border-r bg-linear-to-r from-[#fbfbfb] to-[#ececec] p-0 font-normal">{i}</th>
                  <td className="border-r" />
                  {row.map((cell, c) => (
                    <td key={c} className="border-r p-0 pb-px pl-[3px]">{cell}</td>
                  ))}
                  <td className="overflow-hidden p-0 pb-px pl-[3px]">10</td>
                </tr>
              ))}
            </tbody>
          </table>
          <div className="w-3 flex-1 bg-[#efefef]" />
        </div>
        <div className="flex h-[14px] shrink-0 border-t border-[#b4b4b4] bg-[#e5e5e5]">
          <div className="flex w-[14px] items-center justify-center border-r border-[#b8b8b8] bg-[#f8f8f8]"><Caret dir="left" /></div>
          <div className="flex-[204]" />
          <div className="flex-[478] border-x border-[#b8b8b8] bg-linear-to-b from-[#fefefe] to-[#f0f0f0]" />
          <div className="flex-[67]" />
          <div className="flex w-[14px] items-center justify-center border-l border-[#b8b8b8] bg-[#f8f8f8]"><Caret dir="right" /></div>
        </div>
      </div>
    </section>
  );
}

/* ---------- page ---------- */

function Workspace() {
  return (
    <div className="mt-px flex min-h-0 flex-1 flex-col border-t-2 border-b-2 border-l-2 border-[#9c9c9c] border-b-white">
      <div className="flex h-[27px] shrink-0 items-end pl-px text-xs">
        <button type="button" className="h-[26px] flex-1 rounded-t-[3px] border-x border-t border-[#b4b4b4] bg-linear-to-b from-[#fafafa] to-[#f0f0f0] pb-[2px] text-[13px] text-[#308cc6]">ParaView シーン:2 - ビューア:1</button>
        <button type="button" className="h-6 flex-1 border-y border-r border-[#b4b4b4] bg-[#dcdcdc]">VTK scene:2 - viewer:1</button>
        <button type="button" className="h-6 flex-1 rounded-tr-[3px] border-y border-r border-[#b4b4b4] bg-[#dcdcdc]">シーン OCC: 1 - ビューアー: 1</button>
        <button type="button" aria-label="Close viewer" className={clsx('mr-[3px] mb-[3px] ml-[6px] flex h-[18px] w-4 items-center justify-center', raised)}><CloseGlyph /></button>
      </div>
      <div className="mr-[2px] ml-px flex min-h-0 flex-1 flex-col border-r border-b border-[#b4b4b4]">
        <div className="flex h-[27px] shrink-0 items-end">
          <button type="button" className="flex h-[27px] w-[122px] items-center justify-center gap-1 rounded-t-[3px] border-x border-t border-[#b4b4b4] bg-linear-to-b from-[#fefefe] to-[#f4f4f4] text-xs">
            <Svg w={16} h={16}><rect width="16" height="16" fill="#33363a" /><rect x="1" y="5" width="14" height="10" fill="#fbfbfb" /></Svg>
            Layout #1
            <CloseGlyph />
          </button>
          <button type="button" className="h-[25px] w-[33px] rounded-tr-[3px] border-y border-r border-[#b4b4b4] bg-[#e6e6e6]">+</button>
          <div className="h-px flex-1 bg-[#b4b4b4]" />
        </div>
        <div className="flex min-h-0 flex-1 border-l border-[#b4b4b4] pl-px">
          <RenderView />
          <SpreadSheet />
        </div>
      </div>
    </div>
  );
}

export default function App() {
  return (
    <div className="flex h-screen flex-col overflow-hidden bg-[#efefef] font-['DejaVu_Sans','Noto_Sans_CJK_JP',sans-serif] text-[13px] text-[#111]">
      <MainToolbar />
      <div className="flex min-h-0 flex-1">
        <aside className="flex w-[330px] shrink-0">
          <div className="flex min-w-0 flex-1 flex-col">
            <DockTitle className="-ml-1 h-5 pt-px pr-[2px]">パイプのブラウザー</DockTitle>
            <PipelineBrowser />
            <Inspector />
          </div>
          <div className="flex w-[6px] items-center justify-center pt-12"><Grip vertical /></div>
        </aside>
        <main className="flex min-w-0 flex-1 flex-col">
          <Workspace />
          <section className="flex h-[52px] shrink-0 flex-col">
            <div className="flex h-[7px] items-center justify-center"><Grip /></div>
            <DockTitle className="h-[18px] pr-px pl-[5px]">メッセージウィンドウ</DockTitle>
            <div className="flex h-[27px] overflow-hidden border-t border-l border-[#b4b4b4] bg-white">
              <output className="flex-1 overflow-hidden pt-5 pl-1 font-['Liberation_Mono',monospace] text-[15px] leading-[17px] whitespace-nowrap text-[#1d8a1d]">AsterStudy: lun. 17 14:28:52 007 Job 16: status is FINISHED: Success</output>
              <VBar top="h-5" thumb="h-2" />
            </div>
          </section>
        </main>
      </div>
    </div>
  );
}
